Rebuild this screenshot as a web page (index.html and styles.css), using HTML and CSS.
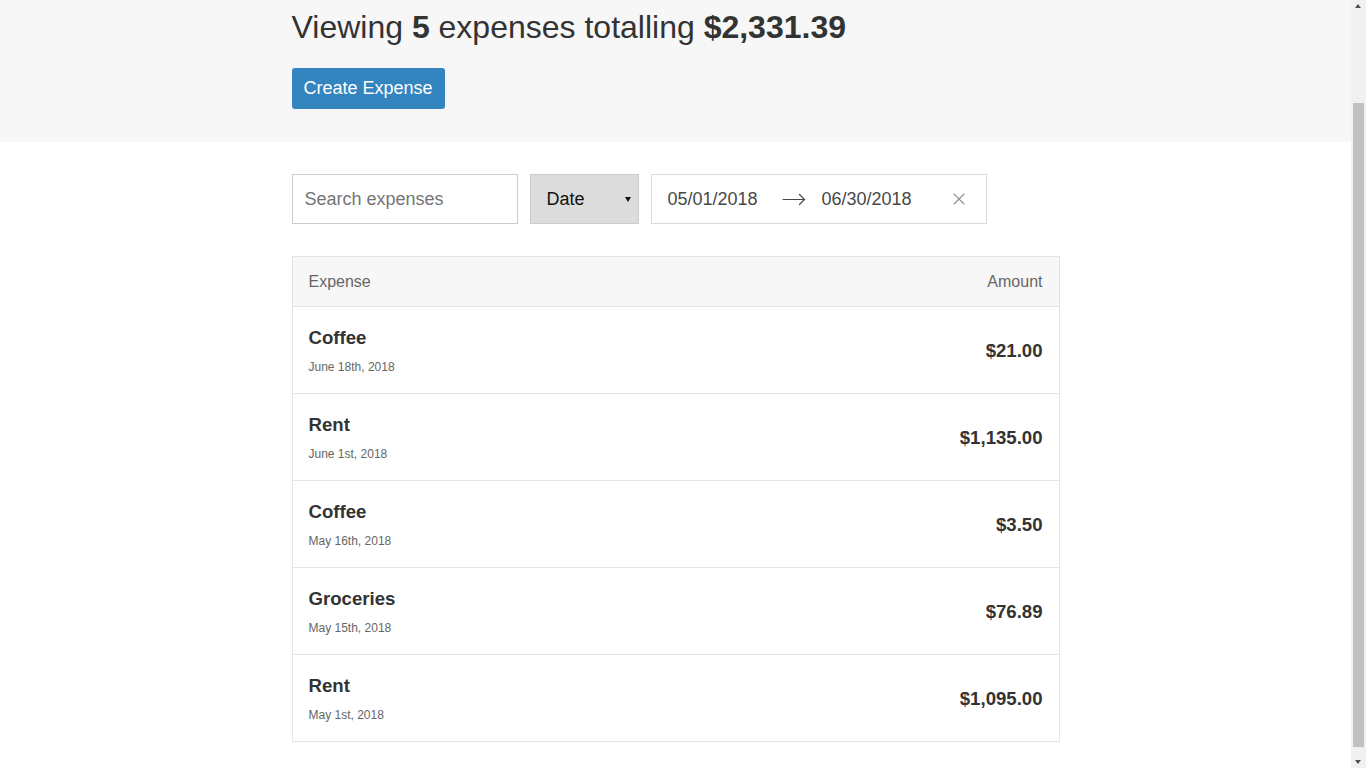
FILE: index.html
```html
<!DOCTYPE html>
<html lang="en">
<head>
<meta charset="utf-8">
<title>Expensify</title>
<link rel="stylesheet" href="styles.css">
</head>
<body>
<div class="page">
  <div class="page-header">
    <div class="content-container">
      <h1 class="page-header__title">Viewing <span>5</span> expenses totalling <span>$2,331.39</span></h1>
      <div class="page-header__actions">
        <a class="button" href="#">Create Expense</a>
      </div>
    </div>
  </div>

  <div class="content-container">
    <div class="input-group">
      <input class="text-input" type="text" placeholder="Search expenses">
      <div class="select-wrap">
        <select class="select">
          <option>Date</option>
          <option>Amount</option>
        </select>
      </div>
      <div class="date-range">
        <input class="date-input date-input--start" type="text" value="05/01/2018" readonly>
        <svg class="date-arrow" width="24" height="24" viewBox="0 0 24 24" aria-hidden="true">
          <path d="M1 12.5H22.5M17.5 7.5L22.5 12.5L17.5 17.5" fill="none" stroke="#484848" stroke-width="1.2" stroke-linecap="round" stroke-linejoin="round"/>
        </svg>
        <input class="date-input date-input--end" type="text" value="06/30/2018" readonly>
        <svg class="date-clear" width="12" height="12" viewBox="0 0 12 12" aria-hidden="true">
          <path d="M1 1L11 11M11 1L1 11" fill="none" stroke="#8a8f91" stroke-width="1.1" stroke-linecap="round"/>
        </svg>
      </div>
    </div>

    <div class="list">
      <div class="list-header">
        <div>Expense</div>
        <div>Amount</div>
      </div>
      <a class="list-item" href="#">
        <div>
          <h3 class="list-item__title">Coffee</h3>
          <p class="list-item__sub-title">June 18th, 2018</p>
        </div>
        <h3 class="list-item__data">$21.00</h3>
      </a>
      <a class="list-item" href="#">
        <div>
          <h3 class="list-item__title">Rent</h3>
          <p class="list-item__sub-title">June 1st, 2018</p>
        </div>
        <h3 class="list-item__data">$1,135.00</h3>
      </a>
      <a class="list-item" href="#">
        <div>
          <h3 class="list-item__title">Coffee</h3>
          <p class="list-item__sub-title">May 16th, 2018</p>
        </div>
        <h3 class="list-item__data">$3.50</h3>
      </a>
      <a class="list-item" href="#">
        <div>
          <h3 class="list-item__title">Groceries</h3>
          <p class="list-item__sub-title">May 15th, 2018</p>
        </div>
        <h3 class="list-item__data">$76.89</h3>
      </a>
      <a class="list-item" href="#">
        <div>
          <h3 class="list-item__title">Rent</h3>
          <p class="list-item__sub-title">May 1st, 2018</p>
        </div>
        <h3 class="list-item__data">$1,095.00</h3>
      </a>
    </div>
  </div>
</div>

<div class="scrollbar" aria-hidden="true">
  <span class="scrollbar__up"></span>
  <span class="scrollbar__thumb"></span>
  <span class="scrollbar__down"></span>
</div>
</body>
</html>
```

FILE: styles.css
```css
* {
  box-sizing: border-box;
}

body {
  margin: 0;
  font-family: "Liberation Sans", Arial, Helvetica, sans-serif;
  color: #333333;
  background: #ffffff;
}

.page {
  margin-right: 15px;
}

.content-container {
  width: 768px;
  margin: 0 auto;
}

/* Page header */
.page-header {
  background: #f7f7f7;
  padding: 8px 0 33px;
  margin-bottom: 32px;
}

.page-header__title {
  margin: 0 0 22px;
  font-size: 32px;
  line-height: 38px;
  font-weight: 300;
  color: #333333;
}

.page-header__title span {
  font-weight: 700;
}

.page-header__actions {
  display: flex;
}

.button {
  display: inline-block;
  background: #3384bf;
  color: #ffffff;
  border: none;
  border-radius: 3px;
  font-family: inherit;
  font-size: 18px;
  line-height: 21px;
  padding: 10px 12px;
  text-decoration: none;
  cursor: pointer;
}

/* Filters */
.input-group {
  display: flex;
  gap: 12px;
  margin-bottom: 32px;
}

.text-input {
  width: 226px;
  height: 50px;
  border: 1px solid #cacccd;
  padding: 0 12px;
  font-family: inherit;
  font-size: 18px;
  color: #333333;
  outline: none;
  border-radius: 0;
}

.text-input::placeholder {
  color: #757575;
}

.select-wrap {
  position: relative;
  width: 109px;
  height: 50px;
}

.select-wrap::after {
  content: "";
  position: absolute;
  right: 8px;
  top: 23px;
  border-left: 3px solid transparent;
  border-right: 3px solid transparent;
  border-top: 5px solid #111111;
  pointer-events: none;
}

.select {
  appearance: none;
  -webkit-appearance: none;
  width: 100%;
  height: 100%;
  border: 1px solid #cacccd;
  border-radius: 0;
  background: #dcdcdc;
  padding: 0 16px;
  font-family: inherit;
  font-size: 18px;
  color: #111111;
  outline: none;
}

.date-range {
  width: 336px;
  height: 50px;
  border: 1px solid #dbdbdb;
  background: #ffffff;
  display: flex;
  align-items: center;
  padding-left: 16px;
}

.date-input {
  border: none;
  padding: 0;
  margin: 0;
  font-family: inherit;
  font-size: 18px;
  color: #484848;
  background: transparent;
  outline: none;
  height: 24px;
}

.date-input--start {
  width: 114px;
}

.date-input--end {
  width: 131px;
  margin-left: 16px;
}

.date-arrow,
.date-clear {
  flex: none;
}

/* List */
.list {
  border: 1px solid #e5e5e5;
  margin-bottom: 32px;
}

.list-header {
  display: flex;
  justify-content: space-between;
  background: #f7f7f7;
  color: #666666;
  font-size: 16px;
  line-height: 17px;
  padding: 16px;
  border-bottom: 1px solid #e5e5e5;
}

.list-item {
  display: flex;
  justify-content: space-between;
  align-items: center;
  padding: 20px 16px 19px;
  border-bottom: 1px solid #e5e5e5;
  color: #333333;
  text-decoration: none;
}

.list-item:last-child {
  border-bottom: none;
}

.list-item__title {
  margin: 0 0 12px;
  font-size: 18.6px;
  line-height: 21px;
  font-weight: 700;
}

.list-item__sub-title {
  margin: 0;
  font-size: 12px;
  line-height: 14px;
  color: #666666;
}

.list-item__data {
  margin: 0;
  font-size: 18.6px;
  line-height: 21px;
  font-weight: 700;
}

/* Window scrollbar look-alike (sits over the right edge) */
.scrollbar {
  position: fixed;
  top: 0;
  right: 0;
  width: 15px;
  height: 100vh;
  background: #f1f1f1;
}

.scrollbar__up,
.scrollbar__down {
  position: absolute;
  left: 4px;
  width: 0;
  height: 0;
  border-left: 3.5px solid transparent;
  border-right: 3.5px solid transparent;
}

.scrollbar__up {
  top: 4px;
  border-bottom: 4px solid #505050;
}

.scrollbar__down {
  bottom: 4px;
  border-top: 4px solid #505050;
}

.scrollbar__thumb {
  position: absolute;
  left: 2px;
  right: 2px;
  top: 103px;
  height: 644px;
  background: #c1c1c1;
}
```
